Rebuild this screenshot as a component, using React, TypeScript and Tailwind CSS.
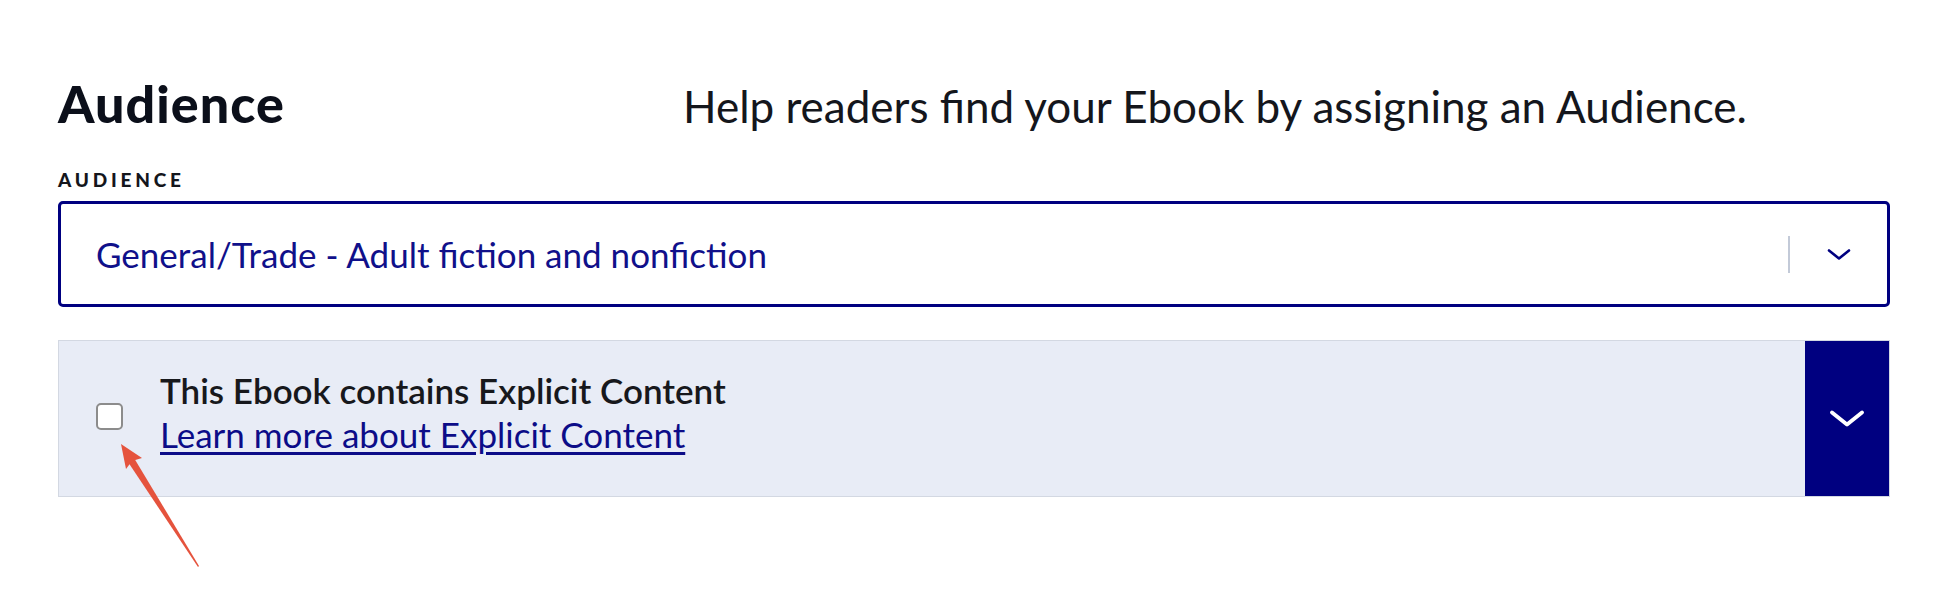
import React from 'react';

const ChevronDown = ({ className }: { className?: string }) => (
    <svg viewBox="0 0 24 12" className={className} fill="none" stroke="currentColor" strokeWidth={2.6} strokeLinecap="round" strokeLinejoin="round">
        <path d="M2 2l10 8 10-8" />
    </svg>
);

const Arrow = () => (
    <svg className="absolute left-0 top-0 pointer-events-none" width="260" height="589" viewBox="0 0 260 589">
        {/* tapered shaft */}
        <polygon points="198,567 199,566 134,458 128,462" fill="#e5533d" />
        {/* head */}
        <polygon points="121,444 142,458 132,461 126,469" fill="#e5533d" />
    </svg>
);

export default function App() {
    return (
        <div className="relative w-[1956px] h-[589px] bg-white font-['Lato','Liberation_Sans',sans-serif]">
            <div className="pl-[58px] pr-[66px] pt-[73px]">
                <div className="flex items-baseline">
                    <h2 className="w-[625px] shrink-0 text-[52px] leading-[60px] font-black tracking-[0.02em] text-[#0b0f1a]">Audience</h2>
                    <p className="text-[44px] leading-[60px] text-[#14161c]">Help readers find your Ebook by assigning an Audience.</p>
                </div>

                <div className="mt-[33px] text-[19px] leading-[22px] font-black tracking-[0.2em] text-[#14161c]">AUDIENCE</div>

                <div className="mt-[10px] h-[106px] flex items-center border-[3px] border-[#000080] rounded-[5px] pl-[35px] pr-[36px]">
                    <span className="flex-1 text-[35px] text-[#10108a]">General/Trade - Adult fiction and nonfiction</span>
                    <span className="w-[2px] h-[37px] bg-[#c3cad8]" />
                    <ChevronDown className="ml-[37px] w-[24px] h-[13px] text-[#000080]" />
                </div>

                <div className="mt-[33px] h-[157px] flex border border-[#d3d8e2] bg-[#e8ecf6]">
                    <div className="flex-1 flex items-start pl-[37px] pt-[27px]">
                        <span className="mt-[35px] w-[27px] h-[27px] shrink-0 rounded-[5px] border-2 border-[#8c8c8c] bg-white" />
                        <div className="ml-[37px] flex flex-col">
                            <span className="text-[35px] leading-[44px] font-semibold text-[#17181c]">This Ebook contains Explicit Content</span>
                            <a href="#" className="text-[35px] leading-[44px] text-[#0c0c88] underline underline-offset-[4px]">Learn more about Explicit Content</a>
                        </div>
                    </div>
                    <div className="w-[84px] flex items-center justify-center bg-[#000080]">
                        <ChevronDown className="w-[36px] h-[19px] text-white" />
                    </div>
                </div>
            </div>
            <Arrow />
        </div>
    );
}
